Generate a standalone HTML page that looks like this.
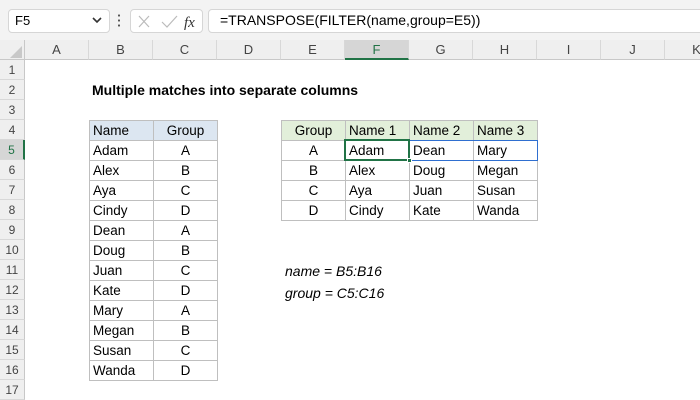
<!DOCTYPE html>
<html><head><meta charset="utf-8"><style>
*{margin:0;padding:0;box-sizing:border-box}
body{width:700px;height:400px;background:#fff;font-family:"Liberation Sans",Calibri,sans-serif;position:relative;overflow:hidden;font-size:13px;color:#000}
.a{position:absolute}
.tb{left:0;top:0;width:700px;height:40px;background:#f3f3f3}
.box{background:#fff;border:1px solid #d6d6d6;border-radius:4px}
.ch{top:40px;height:20px;background:#efefef;border-bottom:1px solid #c8c8c8;border-right:1px solid #d8d8d8;text-align:center;line-height:19px;color:#444;font-size:13px}
.rh{left:0;width:25px;height:20px;background:#efefef;border-bottom:1px solid #d8d8d8;border-right:1px solid #c8c8c8;text-align:center;line-height:20px;color:#444;font-size:12px}
table{border-collapse:collapse;table-layout:fixed;position:absolute}
td{width:64px;height:20px;border:1px solid #bfbfbf;padding:0 0 0 3px;font-size:13.5px;line-height:18px;overflow:hidden;white-space:nowrap}
td.ctr{text-align:center;padding-left:0}
</style></head><body>
<div class="a tb"></div>
<div class="a box" style="left:8px;top:9px;width:102px;height:24px"></div>
<div class="a" style="left:15px;top:13px;font-size:13px">F5</div>
<svg class="a" style="left:92px;top:16px" width="10" height="8"><path d="M1 2 L5 6 L9 2" stroke="#333" stroke-width="1.6" fill="none"/></svg>
<div class="a" style="left:118px;top:13px;width:2px;height:14px;background:radial-gradient(circle,#555 1px,transparent 1.2px) 0 0/2px 5px"></div>
<div class="a box" style="left:130px;top:9px;width:73px;height:24px"></div>
<svg class="a" style="left:136px;top:13px" width="62" height="18"><path d="M3 3 L13 14 M13 3 L3 14" stroke="#bbb" stroke-width="1.2"/><path d="M26 9 L31 14 L41 3" stroke="#bbb" stroke-width="1.2" fill="none"/><text x="48" y="14" font-family="Liberation Serif" font-style="italic" font-size="15" fill="#333">fx</text></svg>
<div class="a box" style="left:208px;top:9px;width:500px;height:24px"></div>
<div class="a" style="left:220px;top:12px;font-size:14px">=TRANSPOSE(FILTER(name,group=E5))</div>
<div class="a" style="left:0;top:40px;width:25px;height:20px;background:#efefef;border-right:1px solid #c8c8c8;border-bottom:1px solid #c8c8c8"></div>
<svg class="a" style="left:10px;top:46px" width="12" height="12"><path d="M12 0 L12 12 L0 12Z" fill="#c8c8c8"/></svg>
<div class="a ch" style="left:25px;width:64px">A</div>
<div class="a ch" style="left:89px;width:64px">B</div>
<div class="a ch" style="left:153px;width:64px">C</div>
<div class="a ch" style="left:217px;width:64px">D</div>
<div class="a ch" style="left:281px;width:64px">E</div>
<div class="a ch" style="left:345px;width:64px;background:#d6d6d6;border-bottom:2px solid #217346;color:#217346">F</div>
<div class="a ch" style="left:409px;width:64px">G</div>
<div class="a ch" style="left:473px;width:64px">H</div>
<div class="a ch" style="left:537px;width:64px">I</div>
<div class="a ch" style="left:601px;width:64px">J</div>
<div class="a ch" style="left:665px;width:64px">K</div>
<div class="a rh" style="top:60px">1</div><div class="a rh" style="top:80px">2</div><div class="a rh" style="top:100px">3</div><div class="a rh" style="top:120px">4</div>
<div class="a rh" style="top:140px;background:#d6d6d6;border-right:2px solid #217346;color:#217346">5</div>
<div class="a rh" style="top:160px">6</div><div class="a rh" style="top:180px">7</div><div class="a rh" style="top:200px">8</div><div class="a rh" style="top:220px">9</div><div class="a rh" style="top:240px">10</div><div class="a rh" style="top:260px">11</div><div class="a rh" style="top:280px">12</div><div class="a rh" style="top:300px">13</div><div class="a rh" style="top:320px">14</div><div class="a rh" style="top:340px">15</div><div class="a rh" style="top:360px">16</div><div class="a rh" style="top:380px">17</div>
<div class="a" style="left:92px;top:82px;font-weight:bold;font-size:14px">Multiple matches into separate columns</div>

<table style="left:89px;top:120px;width:129px">
<tr><td style="background:#dce6f1">Name</td><td class="ctr" style="background:#dce6f1">Group</td></tr>
<tr><td>Adam</td><td class="ctr">A</td></tr>
<tr><td>Alex</td><td class="ctr">B</td></tr>
<tr><td>Aya</td><td class="ctr">C</td></tr>
<tr><td>Cindy</td><td class="ctr">D</td></tr>
<tr><td>Dean</td><td class="ctr">A</td></tr>
<tr><td>Doug</td><td class="ctr">B</td></tr>
<tr><td>Juan</td><td class="ctr">C</td></tr>
<tr><td>Kate</td><td class="ctr">D</td></tr>
<tr><td>Mary</td><td class="ctr">A</td></tr>
<tr><td>Megan</td><td class="ctr">B</td></tr>
<tr><td>Susan</td><td class="ctr">C</td></tr>
<tr><td>Wanda</td><td class="ctr">D</td></tr>
</table>

<table style="left:281px;top:120px;width:257px">
<tr><td class="ctr" style="background:#e2efda">Group</td><td style="background:#e2efda">Name 1</td><td style="background:#e2efda">Name 2</td><td style="background:#e2efda">Name 3</td></tr>
<tr><td class="ctr">A</td><td>Adam</td><td>Dean</td><td>Mary</td></tr>
<tr><td class="ctr">B</td><td>Alex</td><td>Doug</td><td>Megan</td></tr>
<tr><td class="ctr">C</td><td>Aya</td><td>Juan</td><td>Susan</td></tr>
<tr><td class="ctr">D</td><td>Cindy</td><td>Kate</td><td>Wanda</td></tr>
</table>
<div class="a" style="left:345px;top:140px;width:193px;height:21px;border:1px solid #2f6fd0"></div>
<div class="a" style="left:344px;top:139px;width:66px;height:22px;border:2px solid #217346"></div>
<div class="a" style="left:407px;top:158px;width:5px;height:5px;background:#217346;border:1px solid #fff"></div>

<div class="a" style="left:285px;top:263px;font-style:italic;font-size:14px">name = B5:B16</div>
<div class="a" style="left:285px;top:285px;font-style:italic;font-size:14px">group = C5:C16</div>
</body></html>
